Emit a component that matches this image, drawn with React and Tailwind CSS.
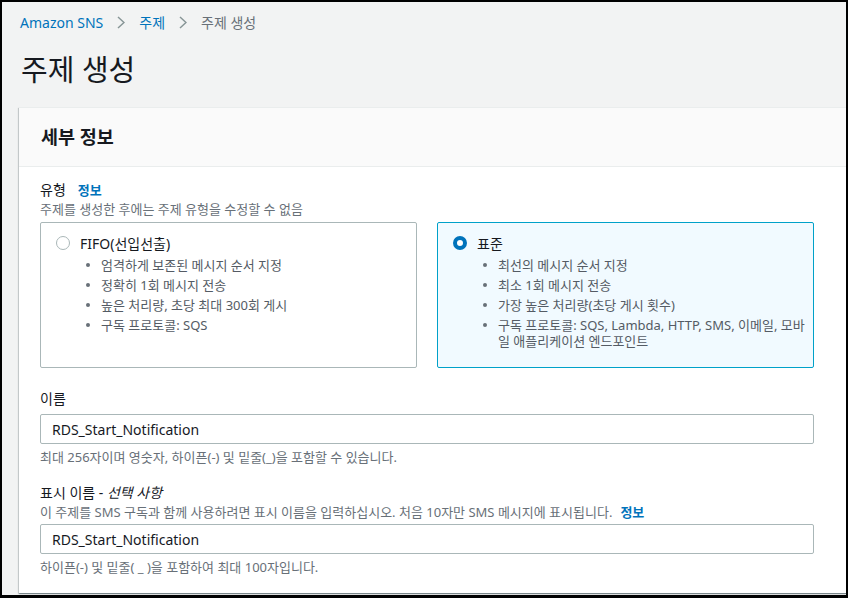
import React from 'react';

const fifoPoints = [
  '엄격하게 보존된 메시지 순서 지정',
  '정확히 1회 메시지 전송',
  '높은 처리량, 초당 최대 300회 게시',
  '구독 프로토콜: SQS',
];

const standardPoints = [
  '최선의 메시지 순서 지정',
  '최소 1회 메시지 전송',
  '가장 높은 처리량(초당 게시 횟수)',
  '구독 프로토콜: SQS, Lambda, HTTP, SMS, 이메일, 모바일 애플리케이션 엔드포인트',
];

function Chevron() {
  return (
    <svg width="8" height="13" viewBox="0 0 8 13" className="mx-[14px] shrink-0">
      <path d="M1 1l6 5.5-6 5.5" fill="none" stroke="#879596" strokeWidth="1.5" />
    </svg>
  );
}

function Radio({ checked }) {
  return checked ? (
    <span className="w-[14px] h-[14px] rounded-full border-[4px] border-[#0073bb] bg-white shrink-0" />
  ) : (
    <span className="w-[14px] h-[14px] rounded-full border-[1.5px] border-[#aab7b8] bg-white shrink-0" />
  );
}

function Tile({ title, points, checked }) {
  return (
    <div
      className={`border rounded-[2px] pt-[10px] pb-[18px] pl-[15px] pr-[4px] ${
        checked ? 'border-[#00a1c9] bg-[#f1faff]' : 'border-[#aab7b8] bg-white'
      }`}
    >
      <div className="flex items-center h-5">
        <Radio checked={checked} />
        <span className="ml-[10px] text-[14px] text-[#16191f]">{title}</span>
      </div>
      <ul className="mt-[4px] pl-[30px]">
        {points.map((p) => (
          <li key={p} className="flex items-start mb-1 last:mb-0 text-[13px] leading-4 text-[#545b64]">
            <span className="w-[4px] h-[4px] rounded-full bg-[#687078] mt-[6px] shrink-0" />
            <span className="ml-[11px] break-all">{p}</span>
          </li>
        ))}
      </ul>
    </div>
  );
}

export default function App() {
  return (
    <div className="w-[848px] h-[598px] overflow-hidden border-black border-t-2 border-l-2 border-r-2 border-b-[3px] bg-[#f2f3f3] pl-[18px] pt-[10px] font-['Noto_Sans','Noto_Sans_CJK_KR',sans-serif]">
      {/* Breadcrumb */}
      <nav className="flex items-center h-5 text-[14px]">
        <span className="text-[#0073bb]">Amazon SNS</span>
        <Chevron />
        <span className="text-[#0073bb]">주제</span>
        <Chevron />
        <span className="text-[#687078]">주제 생성</span>
      </nav>

      <h1 className="mt-5 ml-[1px] text-[29px] leading-9 font-normal text-[#16191f]">주제 생성</h1>

      {/* Details card */}
      <div className="mt-[19px] -ml-[1px] w-[880px] bg-white shadow-[0_1px_1px_0_rgba(0,28,36,0.3),1px_1px_1px_0_rgba(0,28,36,0.15),-1px_1px_1px_0_rgba(0,28,36,0.15)] border-t border-[#eaeded]">
        <div className="h-[59px] bg-[#fafafa] border-b border-[#eaeded] flex items-center pl-[22px]">
          <h2 className="text-[18.5px] font-bold text-[#16191f]">세부 정보</h2>
        </div>

        <div className="w-[795px] pl-[21px] pt-[13px] pb-[18px]">
          <div className="flex items-baseline h-5">
            <span className="text-[14px] leading-5 text-[#16191f]">유형</span>
            <span className="ml-[12px] text-[13px] font-bold text-[#0073bb]">정보</span>
          </div>
          <p className="mt-[1px] text-[13px] leading-4 text-[#687078]">주제를 생성한 후에는 주제 유형을 수정할 수 없음</p>

          <div className="mt-[5px] grid grid-cols-2 gap-5">
            <Tile title="FIFO(선입선출)" points={fifoPoints} />
            <Tile title="표준" points={standardPoints} checked />
          </div>

          <label className="block mt-[21px] text-[14px] leading-5 text-[#16191f]">이름</label>
          <div className="mt-[5px] h-[30px] border border-[#aab7b8] rounded-[2px] flex items-center pl-[11px] text-[14px] text-[#16191f]">
            RDS_Start_Notification
          </div>
          <p className="mt-[5px] text-[13px] leading-4 text-[#687078]">
            최대 256자이며 영숫자, 하이픈(-) 및 밑줄(_)을 포함할 수 있습니다.
          </p>

          <label className="block mt-[18px] text-[14px] leading-5 text-[#16191f]">
            표시 이름 - <i>선택 사항</i>
          </label>
          <p className="mt-[1px] text-[13px] leading-4 text-[#687078]">
            이 주제를 SMS 구독과 함께 사용하려면 표시 이름을 입력하십시오. 처음 10자만 SMS 메시지에 표시됩니다.
            <span className="ml-[8px] font-bold text-[#0073bb]">정보</span>
          </p>
          <div className="mt-[4px] h-[30px] border border-[#aab7b8] rounded-[2px] flex items-center pl-[11px] text-[14px] text-[#16191f]">
            RDS_Start_Notification
          </div>
          <p className="mt-[5px] text-[13px] leading-4 text-[#687078]">하이픈(-) 및 밑줄( _ )을 포함하여 최대 100자입니다.</p>
        </div>
      </div>
    </div>
  );
}
